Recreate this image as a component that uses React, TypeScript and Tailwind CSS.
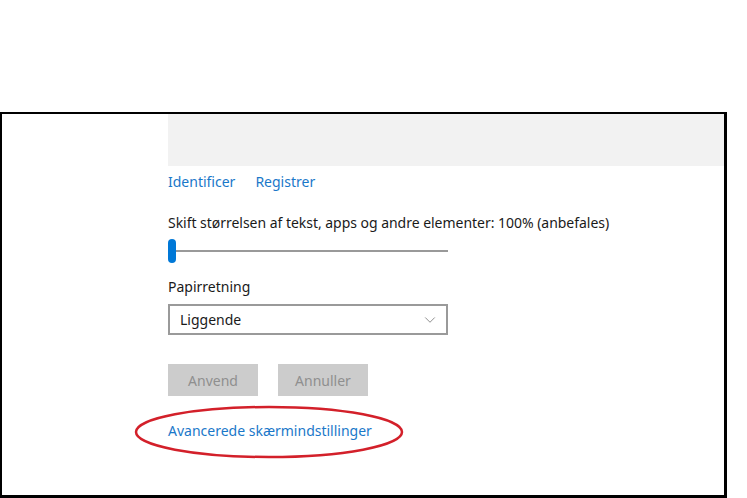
import { ChevronDown } from "lucide-react";

export default function App() {
  return (
    <div className="w-[747px] h-[498px] bg-white overflow-hidden font-['Noto_Sans',sans-serif]">
      <div className="mt-[112px] w-[727px] h-[386px] border-2 border-black border-r-[3px] border-b-[3px] bg-white">
        <div className="pl-[166px]">
          <div className="h-[52px] bg-[#f2f2f2]" />
          <div className="flex gap-[20px] mt-[6px] text-[14px] text-[#1a78c9] leading-[20px]">
            <span>Identificer</span>
            <span>Registrer</span>
          </div>
          <div className="mt-[21px] text-[14px] text-[#1a1a1a] leading-[20px] tracking-[-0.03px]">
            Skift størrelsen af tekst, apps og andre elementer: 100% (anbefales)
          </div>
          <div className="relative mt-[6px] w-[280px] h-[24px] flex items-center">
            <div className="w-[8px] h-[24px] rounded-full bg-[#0078d7]" />
            <div className="flex-1 h-[2px] bg-[#999999]" />
          </div>
          <div className="mt-[14px] text-[14px] text-[#1a1a1a] leading-[20px]">Papirretning</div>
          <div className="mt-[7px] w-[280px] h-[31px] border-2 border-[#9a9a9a] flex items-center justify-between pl-[10px] pr-[7px] text-[14px] text-[#1a1a1a]">
            <span>Liggende</span>
            <ChevronDown size={18} strokeWidth={1.1} className="text-[#777]" />
          </div>
          <div className="flex gap-[20px] mt-[29px]">
            <div className="w-[90px] h-[32px] bg-[#cccccc] text-[#8f8f8f] text-[14px] flex items-center justify-center">Anvend</div>
            <div className="w-[90px] h-[32px] bg-[#cccccc] text-[#8f8f8f] text-[14px] flex items-center justify-center">Annuller</div>
          </div>
          <div className="relative mt-[25px] w-fit text-[14px] text-[#1a78c9] leading-[20px]">
            Avancerede skærmindstillinger
            <svg className="absolute left-[-35px] top-[-17px]" width="272" height="56" viewBox="0 0 272 56">
              <ellipse cx="136" cy="28" rx="133" ry="25" fill="none" stroke="#d3202a" strokeWidth="2.5" />
            </svg>
          </div>
        </div>
      </div>
    </div>
  );
}
